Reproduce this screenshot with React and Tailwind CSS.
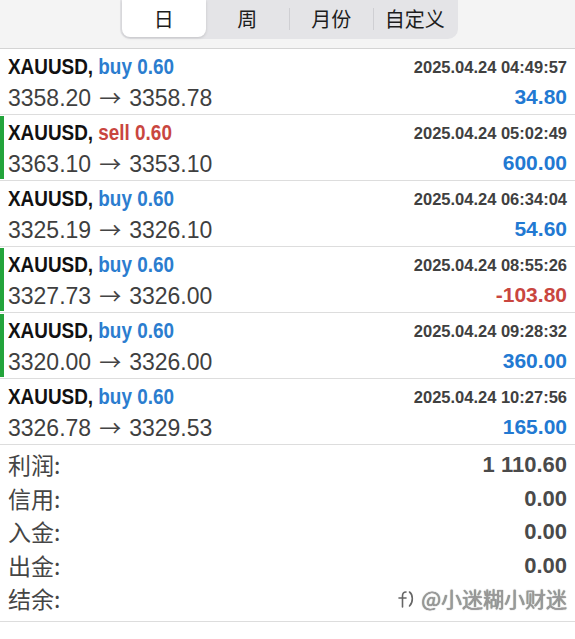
import React from "react";

const trades = [
  { side: "buy", date: "2025.04.24 04:49:57", open: "3358.20", close: "3358.78", profit: "34.80", mark: false },
  { side: "sell", date: "2025.04.24 05:02:49", open: "3363.10", close: "3353.10", profit: "600.00", mark: true },
  { side: "buy", date: "2025.04.24 06:34:04", open: "3325.19", close: "3326.10", profit: "54.60", mark: false },
  { side: "buy", date: "2025.04.24 08:55:26", open: "3327.73", close: "3326.00", profit: "-103.80", mark: true },
  { side: "buy", date: "2025.04.24 09:28:32", open: "3320.00", close: "3326.00", profit: "360.00", mark: true },
  { side: "buy", date: "2025.04.24 10:27:56", open: "3326.78", close: "3329.53", profit: "165.00", mark: false },
];

const summary = [
  ["利润:", "1 110.60"],
  ["信用:", "0.00"],
  ["入金:", "0.00"],
  ["出金:", "0.00"],
  ["结余:", ""],
];

const cjk = { fontFamily: '"Noto Sans CJK SC", sans-serif' };
const sans = { fontFamily: '"Liberation Sans", Arial, sans-serif' };

function Row({ t }) {
  const neg = t.profit.startsWith("-");
  return (
    <div className="flex h-[66px] border-b border-[#dddddd] bg-white">
      <div className={`w-[4px] my-[1px] ${t.mark ? "bg-[#23a43b]" : "bg-transparent"}`} />
      <div className="flex-1 pl-[4px] pr-[8px] pt-[3px]">
        <div className="flex items-center justify-between h-[30px]">
          <div
            className="text-[22.5px] font-bold leading-[30px] text-[#111111] whitespace-nowrap origin-left scale-x-[0.84]"
            style={sans}
          >
            XAUUSD,{" "}
            <span className={t.side === "buy" ? "text-[#2b7dcf]" : "text-[#c9463f]"}>
              {t.side} 0.60
            </span>
          </div>
          <div className="text-[16.5px] font-bold leading-[30px] text-[#404040]" style={sans}>
            {t.date}
          </div>
        </div>
        <div className="flex items-center justify-between h-[30px]">
          <div className="text-[23px] leading-[30px] text-[#3f3f3f] whitespace-nowrap" style={sans}>
            {t.open}
            <span className="mx-[8px] text-[22px] text-[#444444]" style={cjk}>→</span>
            {t.close}
          </div>
          <div
            className={`text-[21px] font-bold leading-[30px] ${neg ? "text-[#c9463f]" : "text-[#2279d2]"}`}
            style={sans}
          >
            {t.profit}
          </div>
        </div>
      </div>
    </div>
  );
}

export default function App() {
  const tabs = ["日", "周", "月份", "自定义"];
  return (
    <div className="w-[575px] h-[639px] bg-white overflow-hidden">
      <div className="h-[49px] bg-[#f4f4f4] border-b border-[#d4d4d4] flex justify-center">
        <div className="ml-[3px] w-[338px] h-[39px] bg-[#e4e4e7] rounded-b-[10px] flex items-stretch px-[2px] pb-[2px]">
          {tabs.map((tab, i) => (
            <div key={tab} className="flex-1 flex items-center">
              {i >= 2 && <div className="w-px h-[22px] bg-[#cfcfd3]" />}
              <div
                className={`flex-1 h-full flex items-center justify-center text-[20px] text-[#1d1d1d] ${
                  i === 0 ? "bg-white rounded-b-[8px] shadow-[0_1px_3px_rgba(0,0,0,0.15)]" : ""
                }`}
                style={cjk}
              >
                {tab}
              </div>
            </div>
          ))}
        </div>
      </div>
      {trades.map((t, i) => (
        <Row key={i} t={t} />
      ))}
      <div className="pt-[3px] pb-[5px] pl-[8px] pr-[8px] border-b border-[#dddddd]">
        {summary.map(([k, v], i) => (
          <div key={k} className="h-[33.5px] flex items-center justify-between">
            <div className="text-[23px] text-[#454545] leading-none" style={cjk}>
              {k}
            </div>
            {i < 4 ? (
              <div className="text-[22px] font-bold text-[#4a4a4a]" style={sans}>
                {v}
              </div>
            ) : (
              <div className="flex items-center gap-[3px] text-[#9a9a9a]">
                <svg width="22" height="24" viewBox="0 0 22 24" fill="none" stroke="#666" strokeWidth="1.6" strokeLinecap="round">
                  <path d="M10 5c-2.5 0-3.5 1.8-3.5 4V20" />
                  <path d="M3 11h7" />
                  <path d="M13.5 5c3.5 2.5 4 10 0 14" />
                </svg>
                <span className="text-[21px] [text-shadow:0_0_1px_#555]" style={cjk}>@小迷糊小财迷</span>
              </div>
            )}
          </div>
        ))}
      </div>
    </div>
  );
}
